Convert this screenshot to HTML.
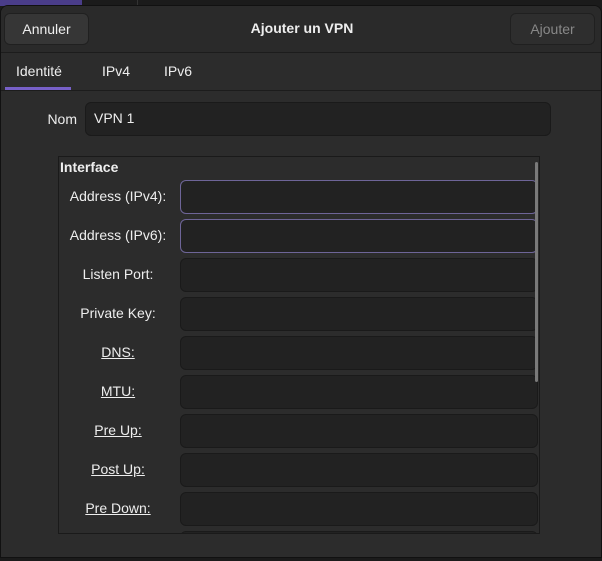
<!DOCTYPE html>
<html><head><style>
*{margin:0;padding:0;box-sizing:border-box}
body{width:602px;height:561px;background:#1b1b1b;font-family:"Liberation Sans",sans-serif;font-size:14px;color:#eee;position:relative;overflow:hidden}
.top{position:absolute;left:0;top:0;width:82px;height:6px;background:#4a3d8a}
.top2{position:absolute;left:137px;top:0;width:1px;height:6px;background:#333}
.dlg{position:absolute;left:0;top:5px;width:602px;height:553px;background:#2c2c2c;border-radius:8px 8px 0 0;border:1px solid #111;overflow:hidden}
.hdr{position:absolute;left:0;top:0;width:602px;height:47px;background:#2a2a2a;border-bottom:1px solid #1c1c1c}
.btn{position:absolute;top:7px;height:32px;border-radius:6px;background:#363636;border:1px solid #202020;text-align:center;line-height:30px;font-size:14px}
.title{position:absolute;left:0;width:100%;top:14px;text-align:center;font-weight:bold;font-size:14px}
.tabs{position:absolute;left:0;top:48px;width:602px;height:37px;border-bottom:1px solid #1c1c1c}
.tab{position:absolute;top:9px;font-size:14px}
.ul{position:absolute;left:4px;top:33px;width:66px;height:3px;background:#7760c8}
.lab{position:absolute;text-align:right;font-size:14px}
.ent{position:absolute;background:#222;border:1px solid #1a1a1a;border-radius:6px}
.frame{position:absolute;left:57px;top:150px;width:482px;height:378px;border:1px solid #1a1a1a;overflow:hidden}
.fl{position:absolute;width:120px;left:-1px;text-align:center;font-size:14px}
u{text-decoration:underline}
</style></head><body>
<div class="top"></div><div class="top2"></div>
<div class="dlg">
 <div class="hdr">
  <div class="btn" style="left:3px;width:85px">Annuler</div>
  <div class="title">Ajouter un VPN</div>
  <div class="btn" style="left:509px;width:85px;background:#2e2e2e;color:#888">Ajouter</div>
 </div>
 <div class="tabs">
  <div class="tab" style="left:15px">Identité</div>
  <div class="tab" style="left:101px">IPv4</div>
  <div class="tab" style="left:163px">IPv6</div>
  <div class="ul"></div>
 </div>
 <div class="lab" style="left:28px;width:48px;top:105px">Nom</div>
 <div class="ent" style="left:84px;top:96px;width:466px;height:34px"><span style="position:absolute;left:8px;top:7px">VPN 1</span></div>
 <div class="frame">
  <div style="position:absolute;left:1px;top:2px;font-weight:bold">Interface</div>
  <div class="fl" style="top:31px">Address (IPv4):</div>
  <div class="fl" style="top:70px">Address (IPv6):</div>
  <div class="fl" style="top:109px">Listen Port:</div>
  <div class="fl" style="top:148px">Private Key:</div>
  <div class="fl" style="top:187px"><u>DNS:</u></div>
  <div class="fl" style="top:226px"><u>MTU:</u></div>
  <div class="fl" style="top:265px"><u>Pre Up:</u></div>
  <div class="fl" style="top:304px"><u>Post Up:</u></div>
  <div class="fl" style="top:343px"><u>Pre Down:</u></div>
  <div class="ent" style="left:121px;top:23px;width:358px;height:34px;border-color:#6e6598"></div>
  <div class="ent" style="left:121px;top:62px;width:358px;height:34px;border-color:#6e6598"></div>
  <div class="ent" style="left:121px;top:101px;width:358px;height:34px"></div>
  <div class="ent" style="left:121px;top:140px;width:358px;height:34px"></div>
  <div class="ent" style="left:121px;top:179px;width:358px;height:34px"></div>
  <div class="ent" style="left:121px;top:218px;width:358px;height:34px"></div>
  <div class="ent" style="left:121px;top:257px;width:358px;height:34px"></div>
  <div class="ent" style="left:121px;top:296px;width:358px;height:34px"></div>
  <div class="ent" style="left:121px;top:335px;width:358px;height:34px"></div>
  <div class="ent" style="left:121px;top:374px;width:358px;height:34px"></div>
  <div style="position:absolute;left:476px;top:5px;width:3px;height:220px;background:#7a7a7a;border-radius:2px"></div>
 </div>
</div>
</body></html>
